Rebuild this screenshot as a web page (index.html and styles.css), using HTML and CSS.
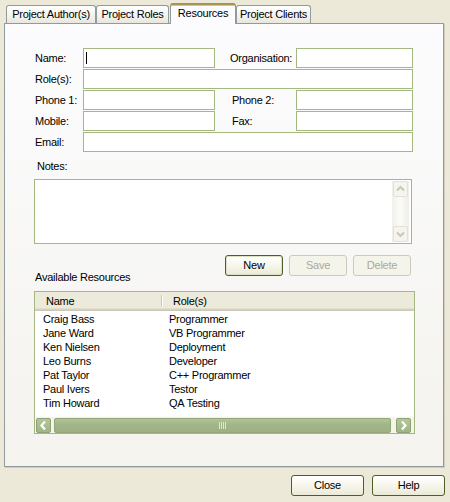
FILE: index.html
```html
<!DOCTYPE html>
<html>
<head>
<meta charset="utf-8">
<title>Resources</title>
<link rel="stylesheet" href="styles.css">
</head>
<body>
<div class="dialog">
  <div class="tabs">
    <div class="tab t1">Project Author(s)</div>
    <div class="tab t2">Project Roles</div>
    <div class="tab active">Resources</div>
    <div class="tab t4">Project Clients</div>
  </div>
  <div class="panel">
    <div class="form">
      <div class="lbl">Name:</div>
      <div class="field"><span class="caret"></span></div>
      <div class="lbl2">Organisation:</div>
      <div class="field field2"></div>

      <div class="lbl">Role(s):</div>
      <div class="field wide"></div>

      <div class="lbl">Phone 1:</div>
      <div class="field"></div>
      <div class="lbl2 ind">Phone 2:</div>
      <div class="field field2"></div>

      <div class="lbl">Mobile:</div>
      <div class="field"></div>
      <div class="lbl2 ind">Fax:</div>
      <div class="field field2"></div>

      <div class="lbl">Email:</div>
      <div class="field wide"></div>
    </div>

    <div class="notes-label">Notes:</div>
    <div class="notes">
      <div class="vscroll">
        <div class="sbtn dis">
          <svg width="15" height="16" viewBox="0 0 15 16"><polyline points="4,9.5 7.5,6 11,9.5" fill="none" stroke="#c9c7ba" stroke-width="2"/></svg>
        </div>
        <div class="sbtn dis">
          <svg width="15" height="16" viewBox="0 0 15 16"><polyline points="4,6.5 7.5,10 11,6.5" fill="none" stroke="#c9c7ba" stroke-width="2"/></svg>
        </div>
      </div>
    </div>

    <div class="actions">
      <div class="avail">Available Resources</div>
      <div class="btns">
        <div class="btn def">New</div>
        <div class="btn disabled">Save</div>
        <div class="btn disabled">Delete</div>
      </div>
    </div>

    <div class="list">
      <div class="lhead">
        <div class="hc c1">Name</div>
        <div class="hc c2">Role(s)</div>
      </div>
      <div class="rows">
        <div class="row"><span class="rc1">Craig Bass</span><span class="rc2">Programmer</span></div>
        <div class="row"><span class="rc1">Jane Ward</span><span class="rc2">VB Programmer</span></div>
        <div class="row"><span class="rc1">Ken Nielsen</span><span class="rc2">Deployment</span></div>
        <div class="row"><span class="rc1">Leo Burns</span><span class="rc2">Developer</span></div>
        <div class="row"><span class="rc1">Pat Taylor</span><span class="rc2">C++ Programmer</span></div>
        <div class="row"><span class="rc1">Paul Ivers</span><span class="rc2">Testor</span></div>
        <div class="row"><span class="rc1">Tim Howard</span><span class="rc2">QA Testing</span></div>
      </div>
      <div class="hscroll">
        <div class="gbtn">
          <svg width="15" height="15" viewBox="0 0 15 15"><polyline points="9,3.5 5.5,7.5 9,11.5" fill="none" stroke="#fff" stroke-width="2.2"/></svg>
        </div>
        <div class="thumb"><span class="grip"></span></div>
        <div class="gbtn">
          <svg width="15" height="15" viewBox="0 0 15 15"><polyline points="6,3.5 9.5,7.5 6,11.5" fill="none" stroke="#fff" stroke-width="2.2"/></svg>
        </div>
      </div>
    </div>
  </div>

  <div class="footer">
    <div class="btn big">Close</div>
    <div class="btn big">Help</div>
  </div>
</div>
</body>
</html>
```

FILE: styles.css
```css
* { box-sizing: border-box; }

html, body {
  margin: 0;
  padding: 0;
  background: #ece9d8;
}

body {
  font-family: "Liberation Sans", Arial, sans-serif;
  font-size: 11px;
  letter-spacing: -0.25px;
  color: #000;
}

.dialog {
  width: 450px;
  height: 502px;
  overflow: hidden;
}

/* Tabs */
.tabs {
  display: flex;
  align-items: flex-end;
  height: 23px;
  padding-left: 6px;
}

.tab {
  height: 18px;
  border: 1px solid #919b9c;
  border-bottom: none;
  border-radius: 3px 3px 0 0;
  background: linear-gradient(#ffffff, #f3f2ec 60%, #e8e6dc);
  text-align: center;
  line-height: 17px;
  white-space: nowrap;
}

.t1 { width: 90px; }
.t2 { width: 73px; }
.t4 { width: 75px; }

.tab.active {
  position: relative;
  z-index: 2;
  width: 66px;
  height: 21px;
  margin-left: 1px;
  margin-bottom: -1px;
  border-top: 2px solid #a6934f;
  box-shadow: inset 0 1px 0 #d9c783;
  background: #fcfcfe;
  line-height: 15px;
  padding-top: 1px;
}

/* Panel */
.panel {
  margin-left: 4px;
  width: 440px;
  height: 444px;
  border: 1px solid #919b9c;
  box-shadow: 1px 1px 0 #d0cdbf;
  background: linear-gradient(#fcfcfe, #f4f3ee);
  padding: 24px 0 0 29px;
}

/* Form grid */
.form {
  display: grid;
  grid-template-columns: 49px 132px 14px 67px 117px;
  grid-auto-rows: 20px;
  row-gap: 1px;
}

.lbl, .lbl2 {
  line-height: 20px;
  padding-left: 1px;
  white-space: nowrap;
}

.lbl { grid-column: 1; }
.lbl2 { grid-column: 4; }
.lbl2.ind { padding-left: 3px; }

.field {
  grid-column: 2;
  border: 1px solid #a5b882;
  background: #fff;
  display: flex;
  align-items: center;
  padding-left: 2px;
}

.field2 { grid-column: 5; }
.wide { grid-column: 2 / 6; }

.caret {
  width: 1px;
  height: 12px;
  background: #000;
}

/* Notes */
.notes-label {
  margin-top: 8px;
  padding-left: 3px;
  line-height: 13px;
}

.notes {
  margin-top: 6px;
  width: 378px;
  height: 65px;
  border: 1px solid #a5b882;
  background: #fff;
  display: flex;
  justify-content: flex-end;
  padding: 1px 2px 1px 0;
}

.vscroll {
  width: 17px;
  padding: 0 1px;
  display: flex;
  flex-direction: column;
  justify-content: space-between;
  background: linear-gradient(90deg, #f1f0ea, #fbfbf8 50%, #efeee6);
}

.sbtn {
  width: 15px;
  height: 16px;
  border: 1px solid #e3e1d6;
  border-radius: 2px;
  background: #f5f4ee;
  display: flex;
}

.sbtn svg { margin: -1px; }

/* Actions */
.actions {
  margin-top: 11px;
  width: 379px;
  display: flex;
  align-items: flex-start;
}

.avail {
  padding-top: 16px;
  padding-left: 1px;
  line-height: 13px;
}

.btns {
  margin-left: auto;
  margin-right: 2px;
  display: flex;
  gap: 6px;
}

.btn {
  width: 58px;
  height: 21px;
  border: 1px solid #4f5e22;
  border-radius: 3px;
  background: linear-gradient(#ffffff, #f7f6ec 50%, #ebe9d6);
  text-align: center;
  line-height: 19px;
}

.btn.def {
  box-shadow: inset 0 0 0 1px #dbe1c4;
}

.btn.disabled {
  border-color: #cbc9bc;
  background: #f5f4ea;
  color: #aca899;
}

/* List */
.list {
  margin-top: 7px;
  width: 381px;
  height: 143px;
  border: 1px solid #a5b882;
  background: #fff;
  display: flex;
  flex-direction: column;
}

.lhead {
  height: 19px;
  display: flex;
  background: #ebeadb;
  box-shadow: inset 0 -1px 0 #cbc7b8, inset 0 -2px 0 #d6d2c2, inset 0 -3px 0 #e2decd;
}

.hc {
  line-height: 17px;
  padding-top: 1px;
}

.hc.c1 {
  width: 128px;
  padding-left: 11px;
  background: linear-gradient(#c7c5b2, #c7c5b2) no-repeat 126px 3px / 1px 11px,
              linear-gradient(#ffffff, #ffffff) no-repeat 127px 3px / 1px 11px;
}

.hc.c2 { padding-left: 10px; }

.rows {
  flex: 1;
  padding-top: 1px;
}

.row {
  display: flex;
  height: 14px;
  line-height: 14px;
}

.rc1 { width: 126px; padding-left: 8px; }
.rc2 { padding-left: 8px; }

.hscroll {
  height: 17px;
  padding: 1px 3px 1px 1px;
  display: flex;
  background: #f4f3ec;
  border-top: 1px solid #fbfbf7;
}

.gbtn {
  width: 15px;
  height: 15px;
  border: 1px solid #8fa372;
  border-radius: 2px;
  background: linear-gradient(#b4c59c, #a0b486);
  display: flex;
}

.gbtn svg { margin: -1px; }

.thumb {
  margin-left: 3px;
  width: 337px;
  margin-right: 5px;
  height: 15px;
  border: 1px solid #93a676;
  border-radius: 2px;
  background: linear-gradient(#b2c39a, #a3b68a 40%, #9db084);
  display: flex;
  justify-content: center;
  align-items: center;
}

.grip {
  width: 8px;
  height: 7px;
  background: repeating-linear-gradient(90deg, #e6e2cc 0 1px, transparent 1px 2px);
}

/* Footer */
.footer {
  display: flex;
  justify-content: flex-end;
  gap: 8px;
  padding: 8px 5px 0 0;
}

.btn.big {
  width: 73px;
}
```
